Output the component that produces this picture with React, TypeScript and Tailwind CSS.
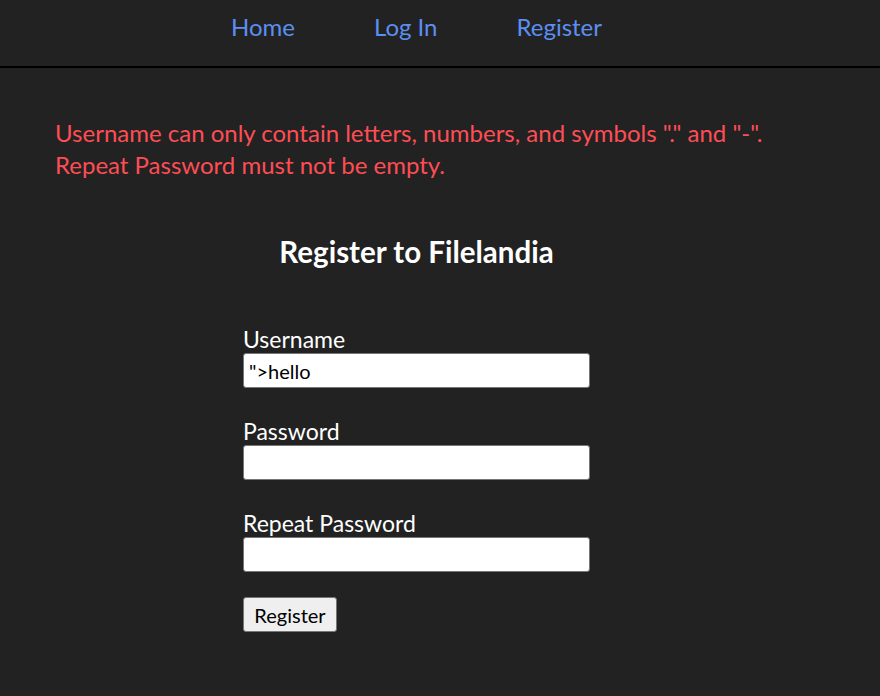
import { useState } from "react";

const font = { fontFamily: "'Lato', 'Liberation Sans', sans-serif" };

function Field({ label, value, onChange, type = "text" }: { label: string; value: string; onChange: (v: string) => void; type?: string }) {
  return (
    <div className="flex flex-col">
      <label className="text-[23px] leading-[28px] text-white">{label}</label>
      <input
        type={type}
        value={value}
        onChange={(e) => onChange(e.target.value)}
        className="h-[35px] w-[347px] rounded-[3px] border border-[#767676] bg-white px-[5px] text-[20px] text-black outline-none"
      />
    </div>
  );
}

export default function App() {
  const [username, setUsername] = useState('">hello');
  const [password, setPassword] = useState("");
  const [repeat, setRepeat] = useState("");

  return (
    <div className="min-h-[696px] bg-[#222222]" style={font}>
      {/* nav */}
      <nav className="h-[68px] border-b-2 border-black">
        <div className="flex w-[833px] justify-center gap-[79px] pt-[11px] text-[24px] leading-[32px]">
          <a href="#" className="text-[#5b8ff0]">Home</a>
          <a href="#" className="text-[#5b8ff0]">Log In</a>
          <a href="#" className="text-[#5b8ff0]">Register</a>
        </div>
      </nav>

      <div className="w-[833px]">
        {/* errors */}
        <div className="pl-[55px] pt-[49px] text-[24px] leading-[32px] text-[#ff4d55]">
          <p>Username can only contain letters, numbers, and symbols "." and "-".</p>
          <p>Repeat Password must not be empty.</p>
        </div>

        <h1 className="mt-[53px] text-center text-[29.5px] font-bold leading-[36px] text-white">
          Register to Filelandia
        </h1>

        <form className="mx-auto mt-[55px] flex w-[347px] flex-col gap-[29px]" onSubmit={(e) => e.preventDefault()}>
          <Field label="Username" value={username} onChange={setUsername} />
          <Field label="Password" value={password} onChange={setPassword} type="password" />
          <Field label="Repeat Password" value={repeat} onChange={setRepeat} type="password" />
          <div className="-mt-[4px]">
            <button className="h-[35px] w-[94px] rounded-[3px] border border-[#767676] bg-[#efefef] text-[20px] text-black">
              Register
            </button>
          </div>
        </form>
      </div>
    </div>
  );
}
